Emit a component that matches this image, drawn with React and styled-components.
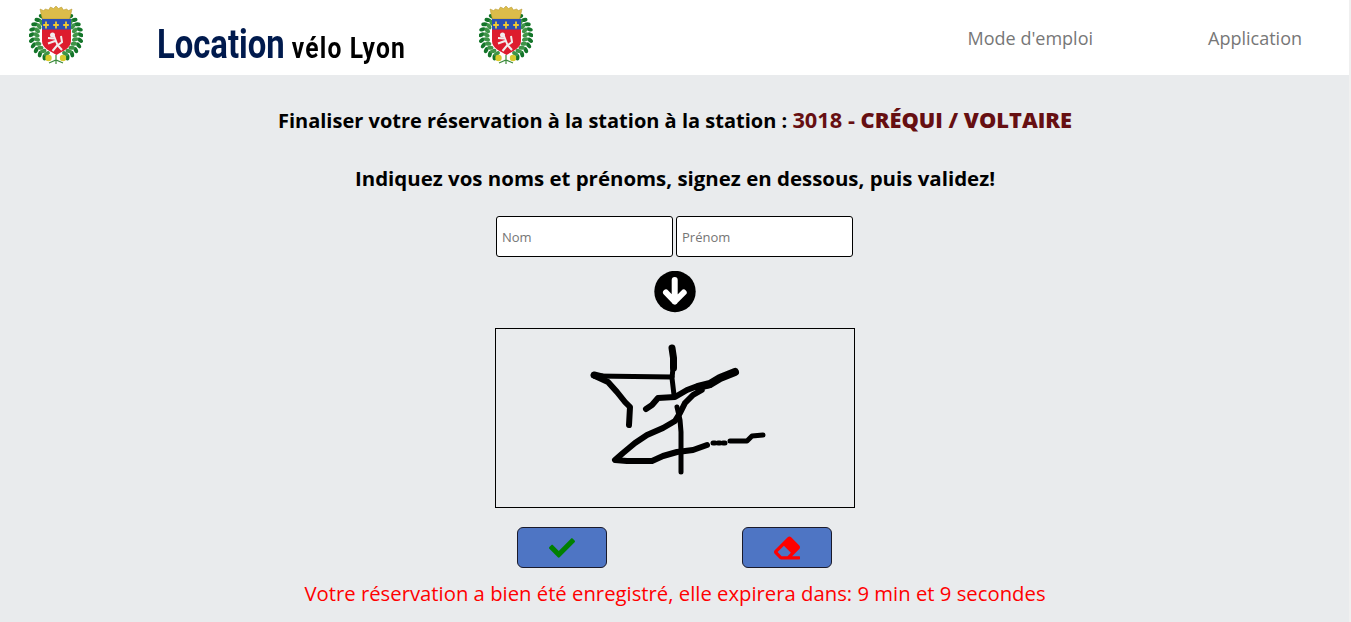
import React from 'react';
import styled, { createGlobalStyle } from 'styled-components';
import { FaCheck, FaEraser } from 'react-icons/fa';

const Global = createGlobalStyle`
  html, body {
    margin: 0;
    height: 622px;
    overflow: hidden;
    background: #e9ebed;
    font-family: "Open Sans", "Noto Sans", sans-serif;
  }
`;

// Page holds a thin light strip on its right edge
const Page = styled.div`
  width: 1351px;
  height: 622px;
  box-sizing: border-box;
  border-right: 2px solid #f0f0f0;
`;

// Top bar
const Header = styled.header`
  display: flex;
  align-items: flex-start;
  height: 75px;
  background: #fff;
  padding-left: 29px;
  box-sizing: border-box;
`;
const Crest = styled.svg`
  display: block;
  width: 54px;
  height: 61px;
  margin-top: 5px;
  flex: none;
  filter: blur(0.3px);
`;
const Title = styled.div`
  width: 322px;
  margin-left: 74px;
  padding-top: 22px;
  font-family: Roboto, sans-serif;
  font-weight: 700;
  white-space: nowrap;
  color: #000;
  font-size: 30px;
  line-height: 46px;
  letter-spacing: 1.4px;
  transform: scaleX(0.82);
  transform-origin: left center;
`;
const TitleStrong = styled.span`
  color: #001a4d;
  font-size: 40px;
  letter-spacing: 0;
`;
const Nav = styled.nav`
  margin-left: auto;
  display: flex;
  gap: 115px;
  padding: 26px 47px 0 0;
`;
const NavLink = styled.a`
  color: #777;
  font-size: 18px;
  line-height: 24px;
`;

// Reservation form
const Main = styled.main`
  width: 1350px;
  display: flex;
  flex-direction: column;
  align-items: center;
`;
const Heading = styled.h3`
  margin: 0;
  font-size: 20px;
  line-height: 28px;
  font-weight: 700;
  color: #000;
  text-align: center;
  white-space: nowrap;
`;
const StationLine = styled(Heading)`
  margin-top: 31px;
`;
const InstructionLine = styled(Heading)`
  margin-top: 29px;
  font-size: 20.45px;
`;
const Station = styled.span`
  color: #660f12;
  font-size: 21.8px;
`;
const Fields = styled.div`
  display: flex;
  gap: 3px;
  margin: 24px 1px 0 0;
`;
const Field = styled.input`
  width: 177px;
  height: 41px;
  box-sizing: border-box;
  padding: 0 5px;
  border: 1px solid #000;
  border-radius: 3px;
  background: #fff;
  font-family: inherit;
  font-size: 13px;
  &::placeholder {
    color: #757575;
    opacity: 1;
  }
`;
const DownIcon = styled.svg`
  display: block;
  width: 42px;
  height: 42px;
  margin: 14px 0 0 0;
`;
const Canvas = styled.div`
  width: 360px;
  height: 180px;
  box-sizing: border-box;
  margin-top: 15px;
  border: 1px solid #000;
`;
const Signature = styled.svg`
  display: block;
  margin: -1px;
  width: 360px;
  height: 180px;
  filter: blur(0.35px);
`;
const Actions = styled.div`
  display: flex;
  gap: 135px;
  margin: 19px 1px 0 0;
`;
const ActionButton = styled.button`
  width: 90px;
  height: 41px;
  box-sizing: border-box;
  display: flex;
  align-items: center;
  justify-content: center;
  padding: 0;
  background: #4e75c4;
  border: 1px solid #1a1a2a;
  border-radius: 6px;
  color: ${(p) => p.$color};
  font-size: 26px;
`;
const Notice = styled.p`
  margin: 11px 0 0;
  color: #ff0000;
  font-size: 20.3px;
  line-height: 28px;
  white-space: nowrap;
`;

// Wreath leaves on two rings either side of the shield
const leaves = [];
for (let i = 0; i < 11; i++) {
  const a = ((i / 10) * 130 + 22) * (Math.PI / 180);
  [[24.5, 24], [19.5, 20]].forEach(([rx, ry], ring) => {
    const dx = Math.sin(a) * rx;
    const y = 36 - Math.cos(a) * ry;
    const deg = (a * 180) / Math.PI;
    const tilt = ring ? 30 : -30;
    leaves.push({ x: 56 - dx, y, r: -deg + tilt, ring });
    leaves.push({ x: 56 + dx, y, r: deg - tilt, ring });
  });
}

// Coat of arms of Lyon, drawn in page coordinates of the first copy
const CoatOfArms = () => (
  <Crest viewBox="29 5 54 61">
    {leaves.map((l, i) => (
      <ellipse key={i} cx={l.x} cy={l.y} rx="2" ry="3.3" fill={l.ring ? '#3f9448' : '#14752a'} transform={`rotate(${l.r} ${l.x} ${l.y})`} />
    ))}
    <path d="M40 9l3.500 1.500 2-1.500 3 1 2-3 3 1.500 2.500-2.500 2.500 2.500 3-1.500 2 3 3-1 2 1.500L72 9l-1.500 7-1 3h-27l-1-3z" fill="#dcbc4a" stroke="#b2952f" strokeWidth=".5" />
    <path d="M42 19h29v22c0 7-8 10-14.500 14C50 51 42 48 42 41z" fill="#dd1c2e" />
    <path d="M42 19h29v10.500H42z" fill="#2a4fb4" />
    {[46, 56, 66].map((x) => (
      <path key={x} d={`M${x} 21.500v7M${x - 2.800} 25h5.600`} stroke="#f2cb2e" strokeWidth="1.800" fill="none" />
    ))}
    <circle cx="52.500" cy="35" r="2.500" fill="#f1eeee" />
    <path d="M54 36l3.500 9M54 38.500l-6-.5M55 41l-7 2.500M57.500 45l-5 6M57.500 45l4.500 5M58 45l4-3-1-6" stroke="#f1eeee" strokeWidth="2" fill="none" />
    <circle cx="48.500" cy="58" r="3.200" fill="#d8cb2e" />
    <circle cx="63" cy="58" r="3.200" fill="#d8cb2e" />
    <path d="M56 55v9M49 63l7-3 7 3" stroke="#3b8a3b" strokeWidth="1.200" fill="none" />
  </Crest>
);

// Hand-drawn signature, [path, pen width]
const strokes = [
  ['M177 20L178.500 30L178.500 40', 7],
  ['M178 40L177 50L179 67', 5],
  ['M100 48L177 49', 5],
  ['M99 47L107 49', 7],
  ['M100 48L113 54L122 64L130 74L135 79L134 97', 6],
  ['M151 81L157 77L163 70L180 69L192 62L200 59L215 57', 6],
  ['M203 59L215 56L225 50L240 44', 8],
  ['M206.700 62L198 67L190 75L185 85L180 93L168 100L152 107L140 115L128 125L120 132L132 133L157 133L168 128L182 124L198 122L212 117', 6],
  ['M218 115L220 115M223 115L225 115M228 115L230 115', 5],
  ['M182 79L185 92L186 104L186 144', 5],
  ['M235 113L252 113L257 108L268 107', 5],
];

function App() {
  return (
    <Page>
      <Global />
      <Header>
        <CoatOfArms />
        <Title>
          <TitleStrong>Location</TitleStrong> vélo Lyon
        </Title>
        <CoatOfArms />
        <Nav>
          <NavLink>Mode d'emploi</NavLink>
          <NavLink>Application</NavLink>
        </Nav>
      </Header>
      <Main>
        <StationLine>
          Finaliser votre réservation à la station à la station : <Station>3018 - <b>CRÉQUI / VOLTAIRE</b></Station>
        </StationLine>
        <InstructionLine>Indiquez vos noms et prénoms, signez en dessous, puis validez!</InstructionLine>
        <Fields>
          <Field placeholder="Nom" />
          <Field placeholder="Prénom" />
        </Fields>
        <DownIcon viewBox="0 0 42 42">
          <circle cx="21" cy="20.500" r="20.700" fill="#000" />
          <path d="M20.700 9v21.500M12 21.500l8.700 9 9-9" fill="none" stroke="#fff" strokeWidth="6" strokeLinecap="round" strokeLinejoin="round" />
        </DownIcon>
        <Canvas>
          <Signature viewBox="0 0 360 180">
            {strokes.map(([d, w]) => (
              <path key={d} d={d} fill="none" stroke="#000" strokeWidth={w} strokeLinecap="round" strokeLinejoin="round" />
            ))}
          </Signature>
        </Canvas>
        <Actions>
          <ActionButton $color="#008000"><FaCheck /></ActionButton>
          <ActionButton $color="#ff0000"><FaEraser /></ActionButton>
        </Actions>
        <Notice>Votre réservation a bien été enregistré, elle expirera dans: 9 min et 9 secondes</Notice>
      </Main>
    </Page>
  );
}

export default App;
